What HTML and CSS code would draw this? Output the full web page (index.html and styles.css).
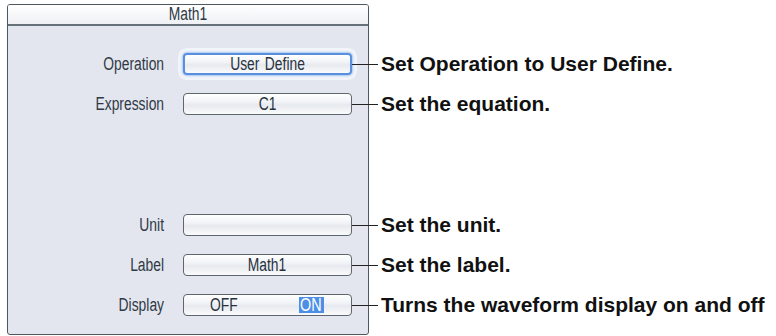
FILE: index.html
```html
<!DOCTYPE html>
<html>
<head>
<meta charset="utf-8">
<link rel="stylesheet" href="styles.css">
</head>
<body>
<div class="page">
  <div class="panel">
    <div class="title"><span class="nw c">Math1</span></div>
    <div class="rows">
      <div class="row"><span class="lbl"><span class="nw r">Operation</span></span><span class="btn focus"><span class="nw c">User Define</span></span></div>
      <div class="row"><span class="lbl"><span class="nw r">Expression</span></span><span class="btn"><span class="nw c">C1</span></span></div>
      <div class="row gap"><span class="lbl"><span class="nw r">Unit</span></span><span class="btn"></span></div>
      <div class="row"><span class="lbl"><span class="nw r">Label</span></span><span class="btn"><span class="nw c">Math1</span></span></div>
      <div class="row"><span class="lbl"><span class="nw r">Display</span></span><span class="btn toggle"><span class="off"><span class="nw l">OFF</span></span><span class="on"><span class="nw l">ON</span></span></span></div>
    </div>
  </div>
  <div class="notes">
    <div class="note"><span class="lead"></span><span class="txt">Set Operation to User Define.</span></div>
    <div class="note"><span class="lead"></span><span class="txt">Set the equation.</span></div>
    <div class="note gap"><span class="lead"></span><span class="txt">Set the unit.</span></div>
    <div class="note"><span class="lead"></span><span class="txt">Set the label.</span></div>
    <div class="note"><span class="lead"></span><span class="txt">Turns the waveform display on and off</span></div>
  </div>
</div>
</body>
</html>
```
FILE: styles.css
```css
html, body {
  margin: 0;
  padding: 0;
  background: #ffffff;
}
.page {
  display: flex;
  align-items: flex-start;
  padding: 4px 0 0 7px;
}
.panel {
  box-sizing: border-box;
  width: 362px;
  height: 331px;
  border: 1px solid #4e5862;
  border-radius: 3px;
  background: #e3e6ee;
  font-family: "Liberation Sans", Arial, sans-serif;
  font-size: 18px;
  color: #2f3945;
  display: flex;
  flex-direction: column;
}
.nw {
  display: inline-block;
  transform: scaleX(0.77);
  white-space: nowrap;
  word-spacing: 2px;
}
.nw.r { transform-origin: right center; }
.nw.c { transform-origin: center center; }
.nw.l { transform-origin: left center; }
.title {
  height: 19px;
  border-bottom: 2px solid #66707a;
  background: linear-gradient(#ffffff, #eef0f5);
  border-radius: 2px 2px 0 0;
  text-align: center;
  line-height: 19px;
}
.rows {
  padding-top: 27px;
  display: flex;
  flex-direction: column;
}
.row {
  display: flex;
  align-items: center;
  height: 22px;
}
.row + .row { margin-top: 18px; }
.row.gap { margin-top: 99px; }
.lbl {
  width: 156px;
  text-align: right;
  line-height: 20px;
}
.btn {
  box-sizing: border-box;
  margin-left: 19px;
  width: 169px;
  height: 22px;
  border: 1px solid #5e6670;
  border-radius: 4px;
  background: linear-gradient(#ffffff 0%, #f1f3f7 40%, #e6e9ee 55%, #fbfbfc 100%);
  text-align: center;
  line-height: 20px;
  color: #28323e;
}
.btn.focus {
  border: 2px solid #5a8ede;
  line-height: 18px;
  box-shadow: 0 0 2px 1px #a8c6f0, 0 0 0 5px rgba(246, 248, 252, 0.75);
}
.toggle {
  display: flex;
  align-items: center;
  text-align: left;
}
.off {
  margin-left: 26px;
  width: 89px;
}
.on {
  background: #4d8fe6;
  color: #ffffff;
  width: 24px;
  line-height: 16px;
  text-align: left;
  padding-left: 1px;
}
.on .nw { transform: scaleX(0.8); }
.notes {
  margin-left: -17px;
  padding-top: 49px;
  display: flex;
  flex-direction: column;
  font-family: "Liberation Sans", Arial, sans-serif;
  font-weight: bold;
  font-size: 21px;
  color: #111111;
}
.note {
  display: flex;
  align-items: center;
  height: 22px;
}
.note + .note { margin-top: 18px; }
.note.gap { margin-top: 99px; }
.lead {
  width: 26px;
  height: 1px;
  background: #222222;
  margin-right: 3px;
}
.txt {
  white-space: nowrap;
}
```
